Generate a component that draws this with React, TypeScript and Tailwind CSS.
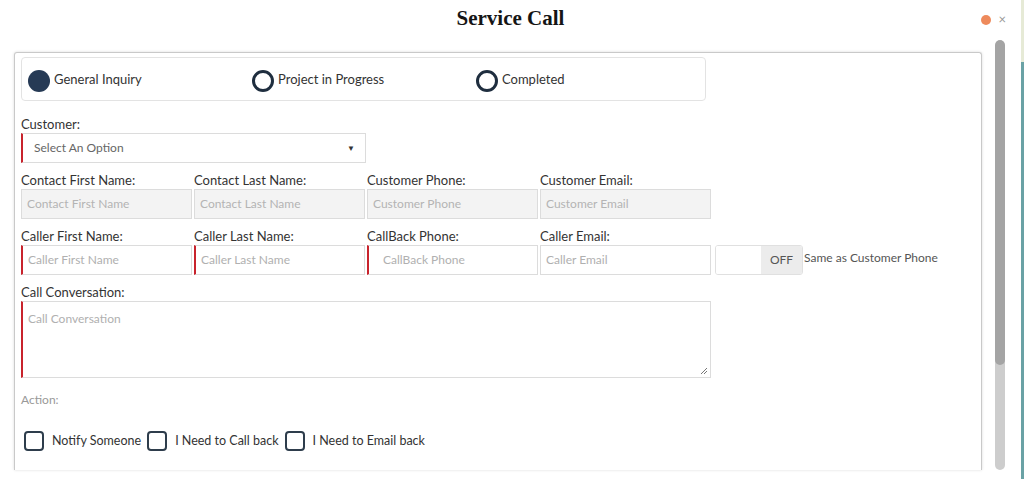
import React from "react";

const font = { fontFamily: "Lato, 'Open Sans', sans-serif" };

function Radio({ label, checked }: { label: string; checked?: boolean }) {
  return (
    <div className="flex w-[224px] items-center gap-[4px]">
      {checked ? (
        <span className="h-[22px] w-[22px] rounded-full bg-[#263a55]" />
      ) : (
        <span className="h-[22px] w-[22px] rounded-full border-[3px] border-[#1f2e3f]" />
      )}
      <span className="-mt-[3px] text-[13px] text-[#333]">{label}</span>
    </div>
  );
}

function Field({
  label,
  placeholder,
  disabled,
  required,
  wide,
}: {
  label: string;
  placeholder: string;
  disabled?: boolean;
  required?: boolean;
  wide?: boolean;
}) {
  return (
    <div className="flex flex-col">
      <label className="h-[16px] text-[13px] leading-[16px] text-[#333]">{label}</label>
      <div
        className={
          "mt-[1px] flex h-[30px] items-center border border-[#dcdcdc] text-[12px] " +
          (disabled ? "bg-[#f3f3f3] text-[#b4b4b4] " : "bg-white text-[#b0b0b0] ") +
          (required ? "border-l-2 border-l-[#c8232c] " : "") +
          (wide ? "pl-[14px]" : "pl-[5px]")
        }
      >
        {placeholder}
      </div>
    </div>
  );
}

function Check({ label }: { label: string }) {
  return (
    <div className="flex items-center">
      <span className="h-[20px] w-[20px] rounded-[4px] border-2 border-[#2e3d4c]" />
      <span className="ml-[8px] mr-[6px] text-[12.5px] text-[#333]">{label}</span>
    </div>
  );
}

export default function App() {
  return (
    <div className="flex h-[479px] w-[1024px] overflow-hidden bg-white" style={font}>
      <div className="flex w-[1021px] flex-col">
        <div className="relative flex h-[38px] shrink-0 items-center justify-center">
          <h1
            className="text-[21px] font-bold text-[#151515]"
            style={{ fontFamily: "'Liberation Serif', 'Times New Roman', serif" }}
          >
            Service Call
          </h1>
          <div className="absolute right-[15px] top-[13px] flex items-center gap-[7px]">
            <span className="h-[10px] w-[10px] rounded-full bg-[#ee8a5c]" />
            <span className="text-[13px] leading-none text-[#999]">×</span>
          </div>
        </div>
        <div className="flex h-[432px] items-start">
          <div className="ml-[14px] mt-[14px] h-[418px] w-[968px] overflow-hidden rounded-t-[3px] border border-b-0 border-[#c9c9c9] px-[6px] pt-[4px] shadow-[0_0_3px_rgba(0,0,0,0.15)]">
            <div className="flex h-[44px] w-[685px] items-center rounded-[4px] border border-[#e3e3e3] pl-[6px] pt-[4px]">
              <Radio label="General Inquiry" checked />
              <Radio label="Project in Progress" />
              <Radio label="Completed" />
            </div>

            <div className="mt-[15px] flex flex-col">
              <label className="h-[16px] text-[13px] leading-[16px] text-[#333]">Customer:</label>
              <div className="mt-[1px] flex h-[30px] w-[345px] items-center justify-between border border-[#dcdcdc] border-l-2 border-l-[#c8232c] pl-[11px] pr-[10px] text-[12px] text-[#666]">
                <span>Select An Option</span>
                <span className="text-[8px] text-[#333]">▼</span>
              </div>
            </div>

            <div className="mt-[9px] flex items-end gap-[3px]">
              <div className="grid grid-cols-[171px_171px_171px_171px] gap-x-[2px]">
                <Field label="Contact First Name:" placeholder="Contact First Name" disabled />
                <Field label="Contact Last Name:" placeholder="Contact Last Name" disabled />
                <Field label="Customer Phone:" placeholder="Customer Phone" disabled />
                <Field label="Customer Email:" placeholder="Customer Email" disabled />
              </div>
            </div>

            <div className="mt-[9px] flex items-end">
              <div className="grid grid-cols-[171px_171px_171px_171px] gap-x-[2px]">
                <Field label="Caller First Name:" placeholder="Caller First Name" required />
                <Field label="Caller Last Name:" placeholder="Caller Last Name" required />
                <Field label="CallBack Phone:" placeholder="CallBack Phone" required wide />
                <Field label="Caller Email:" placeholder="Caller Email" />
              </div>
              <div className="ml-[4px] flex h-[30px] w-[88px] overflow-hidden rounded-[3px] border border-[#e0e0e0]">
                <span className="w-[45px] bg-white" />
                <span className="flex flex-1 items-center justify-center bg-[#ececec] text-[12px] text-[#555]">
                  OFF
                </span>
              </div>
              <span className="mb-[8px] ml-[1px] text-[12px] text-[#555]">Same as Customer Phone</span>
            </div>

            <div className="mt-[9px] flex flex-col">
              <label className="h-[16px] text-[13px] leading-[16px] text-[#333]">Call Conversation:</label>
              <div className="relative mt-[1px] h-[77px] w-[690px] border border-[#dcdcdc] border-l-2 border-l-[#c8232c] pl-[5px] pt-[8px] text-[12px] text-[#b0b0b0]">
                Call Conversation
                <svg className="absolute bottom-[2px] right-[2px]" width="8" height="8" viewBox="0 0 8 8">
                  <path d="M7 1 L1 7 M7 4 L4 7" stroke="#777" strokeWidth="1" />
                </svg>
              </div>
            </div>

            <div className="mt-[13px] text-[12px] text-[#999]">Action:</div>

            <div className="ml-[3px] mt-[22px] flex items-center">
              <Check label="Notify Someone" />
              <Check label="I Need to Call back" />
              <Check label="I Need to Email back" />
            </div>
          </div>
          <div className="ml-[13px] mt-[2px] flex h-[430px] w-[10px] flex-col overflow-hidden rounded-full bg-[#cdcdcd]">
            <div className="h-[325px] rounded-full bg-[#a4a4a4]" />
          </div>
        </div>
      </div>
      <div className="flex w-[3px] flex-col">
        <div className="h-[62px] bg-[#e6ead6]" />
        <div className="flex-1 bg-[#6aa2a5]" />
      </div>
    </div>
  );
}
